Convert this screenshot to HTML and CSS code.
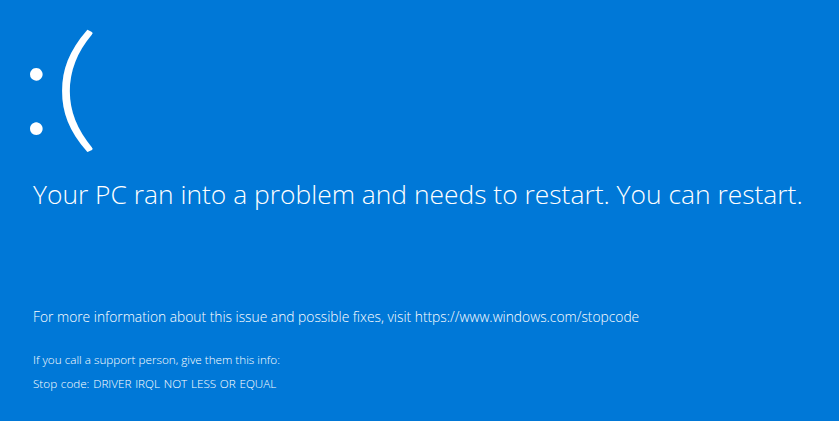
FILE: index.html
```html
<!DOCTYPE html>
<html>
<head>
<meta charset="utf-8">
<link rel="stylesheet" href="styles.css">
</head>
<body>
<main class="screen">
  <div class="face"><span class="colon">:</span><span class="paren">(</span></div>
  <p class="headline">Your PC ran into a problem and needs to restart. You can restart.</p>
  <p class="info">For more information about this issue and possible fixes, visit https://www.windows.com/stopcode</p>
  <p class="support">If you call a support person, give them this info:</p>
  <p class="code">Stop code: DRIVER IRQL NOT LESS OR EQUAL</p>
</main>
</body>
</html>
```
FILE: styles.css
```css
html, body {
  margin: 0;
  padding: 0;
  background: #0078d7;
}
.screen {
  width: 839px;
  height: 421px;
  box-sizing: border-box;
  padding: 0 0 0 33px;
  color: #fff;
  font-family: "Open Sans", "Noto Sans", sans-serif;
  font-weight: 300;
  display: flex;
  flex-direction: column;
}
.screen p { margin: 0; white-space: nowrap; }
.face {
  margin-left: -13px;
  font-family: Lato, "Open Sans", sans-serif;
  font-size: 136px;
  line-height: normal;
  font-weight: 300;
  letter-spacing: 1px;
}
.paren {
  display: inline-block;
  margin-left: -2px;
  transform: scaleX(1.35);
  transform-origin: left center;
}
.headline {
  margin-top: 14px !important;
  font-size: 26.4px;
  line-height: 34px;
}
.info {
  margin-top: 97px !important;
  font-size: 13.8px;
  line-height: 18px;
}
.support {
  margin-top: 25px !important;
  font-size: 11.7px;
  line-height: 16px;
}
.code {
  margin-top: 8px !important;
  font-size: 11.7px;
  line-height: 16px;
  word-spacing: 0.7px;
}
```
